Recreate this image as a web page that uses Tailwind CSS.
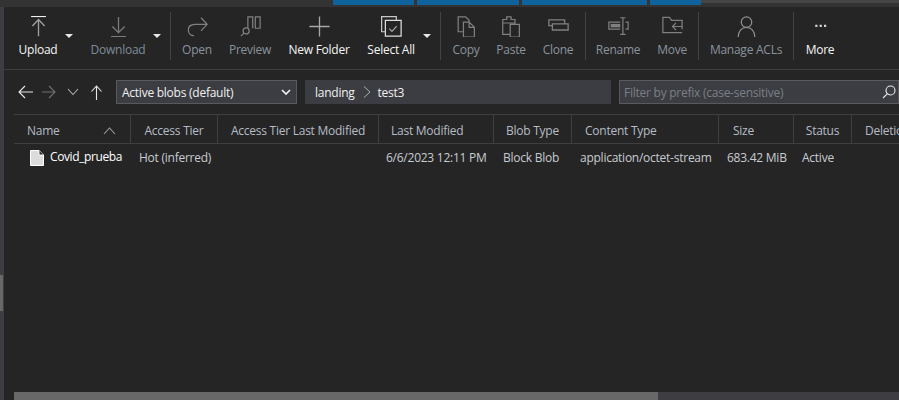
<!DOCTYPE html>
<html>
<head>
<meta charset="utf-8">
<script src="https://cdn.jsdelivr.net/npm/@tailwindcss/browser@4"></script>
</head>
<body class="w-[899px] h-[400px] overflow-hidden bg-[#252526] font-['Open_Sans','Noto_Sans',sans-serif] text-[12px] tracking-[-0.25px] text-[#d4d4d4]">
<div class="flex flex-col h-[400px]">
  <!-- top strip -->
  <div class="h-[7px] bg-[#333334] flex shrink-0">
    <div class="w-[333px]"></div>
    <div class="flex gap-[3px] h-[5px]">
      <div class="w-[81px] bg-[#0e639c]"></div>
      <div class="w-[102px] bg-[#0e639c]"></div>
      <div class="w-[125px] bg-[#0e639c]"></div>
      <div class="w-[51px] bg-[#0e639c]"></div>
    </div>
    <div class="flex-1 h-[3px] bg-[#454547]"></div>
  </div>
  <div class="flex flex-1 min-h-0">
    <!-- left rail -->
    <div class="w-[4px] bg-[#3e3e42] shrink-0 flex flex-col">
      <div class="h-[268px]"></div>
      <div class="h-[36px] w-[3px] bg-[#686868]"></div>
    </div>
    <div class="flex-1 min-w-0 flex flex-col">
      <!-- toolbar -->
      <div class="h-[63px] shrink-0 border-b border-[#3f3f41] flex items-start pt-[5px] pl-[8px]">
        <!-- Upload -->
        <div class="w-[52px] pt-[4px] flex flex-col items-center text-[#f5f5f5] font-medium">
          <svg width="21" height="21" viewBox="0 0 24 24" fill="none" stroke="#a0a0a0" stroke-width="1.500"><path d="M12 23V4M5 11.500L12 4L19 11.500"/><path d="M3.500 .5H20.500" stroke="#f0f0f0"/></svg>
          <span class="mt-[4px]">Upload</span>
        </div>
        <div class="w-[10px] flex justify-center mt-[22px]"><div class="border-x-[4px] border-x-transparent border-t-[4px] border-t-[#e8e8e8] w-0 h-0"></div></div>
        <!-- Download -->
        <div class="w-[62px] ml-[13px] pt-[4px] flex flex-col items-center text-[#7f8b96]">
          <svg width="21" height="21" viewBox="0 0 24 24" fill="none" stroke="#7a7a7a" stroke-width="1.500"><path d="M3.500 23.500H20.500M12 1V19M5 12L12 19L19 12"/></svg>
          <span class="mt-[4px]">Download</span>
        </div>
        <div class="w-[10px] ml-[3px] flex justify-center mt-[22px]"><div class="border-x-[4px] border-x-transparent border-t-[4px] border-t-[#e8e8e8] w-0 h-0"></div></div>
        <div class="w-px h-[48px] bg-[#444446] ml-[8px]"></div>
        <!-- Open -->
        <div class="w-[52px] pt-[4px] flex flex-col items-center text-[#8a939c]">
          <svg width="21" height="21" viewBox="0 0 24 24" fill="none" stroke="#808080" stroke-width="1.400"><path d="M23 9.500H9C4 9.500 1.500 12.500 1.500 16S4 22.500 8 22.500M16 2L23 9.500L16 17"/></svg>
          <span class="mt-[4px]">Open</span>
        </div>
        <!-- Preview -->
        <div class="w-[54px] pt-[4px] flex flex-col items-center text-[#8a939c]">
          <svg width="21" height="21" viewBox="0 0 24 24" fill="none" stroke="#808080" stroke-width="1.400"><path d="M9 14V1H14.500V14M17.500 1H23V14H17.500ZM1 23L4.500 19.500"/><circle cx="7" cy="17" r="3.500"/></svg>
          <span class="mt-[4px]">Preview</span>
        </div>
        <!-- New Folder -->
        <div class="w-[84px] pt-[4px] flex flex-col items-center text-[#f5f5f5] font-medium">
          <svg width="21" height="21" viewBox="0 0 24 24" fill="none" stroke="#a8a8a8" stroke-width="1.500"><path d="M12 .5V23.500M.5 12H23.500"/></svg>
          <span class="mt-[4px]">New Folder</span>
        </div>
        <!-- Select All -->
        <div class="w-[60px] pt-[4px] flex flex-col items-center text-[#f5f5f5] font-medium">
          <svg width="21" height="21" viewBox="0 0 24 24" fill="none" stroke="#c8c8c8" stroke-width="1.400"><path d="M5 18H.7V.7H17.500V5"/><path d="M5 5H23V23H5Z" fill="#252526" stroke="#e0e0e0"/><path d="M9.500 14.500L12.500 17.500L18 11.500" stroke="#a8a8a8"/></svg>
          <span class="mt-[4px]">Select All</span>
        </div>
        <div class="w-[10px] ml-[1px] flex justify-center mt-[22px]"><div class="border-x-[4px] border-x-transparent border-t-[4px] border-t-[#e8e8e8] w-0 h-0"></div></div>
        <div class="w-px h-[48px] bg-[#444446] ml-[8px]"></div>
        <!-- Copy -->
        <div class="w-[50px] pt-[4px] flex flex-col items-center text-[#8a939c]">
          <svg width="21" height="21" viewBox="0 0 24 24" fill="none" stroke="#808080" stroke-width="1.400"><path d="M9 18H2.500V1H11L15 5V7M8.500 7H15L21 13V24H8.500ZM15 7V13H21"/></svg>
          <span class="mt-[4px]">Copy</span>
        </div>
        <!-- Paste -->
        <div class="w-[40px] pt-[4px] flex flex-col items-center text-[#8a939c]">
          <svg width="21" height="21" viewBox="0 0 24 24" fill="none" stroke="#808080" stroke-width="1.400"><path d="M10 21H2V4H6.500V1H11.500V4H16V9M2 8H16M10.500 9.500H21V24H10.500Z"/></svg>
          <span class="mt-[4px]">Paste</span>
        </div>
        <!-- Clone -->
        <div class="w-[54px] pt-[4px] flex flex-col items-center text-[#8a939c]">
          <svg width="21" height="21" viewBox="0 0 24 24" fill="none" stroke="#808080" stroke-width="1.500"><path d="M5 11H1V4.500H19V9M5 9H23V16H5Z"/></svg>
          <span class="mt-[4px]">Clone</span>
        </div>
        <div class="w-px h-[48px] bg-[#444446]"></div>
        <!-- Rename -->
        <div class="w-[64px] pt-[4px] flex flex-col items-center text-[#8a939c]">
          <svg width="21" height="21" viewBox="0 0 24 24" fill="none" stroke="#808080" stroke-width="1.400"><path d="M14 7H1V15H14M14 2H20M17 2V21M14 21H20M20 7H23V15H20"/><rect x="3" y="9" width="11" height="4" fill="#808080" stroke="none"/></svg>
          <span class="mt-[4px]">Rename</span>
        </div>
        <!-- Move -->
        <div class="w-[44px] pt-[4px] flex flex-col items-center text-[#8a939c]">
          <svg width="21" height="21" viewBox="0 0 24 24" fill="none" stroke="#808080" stroke-width="1.400"><path d="M23 15V5H11L8.500 1.500H1V19H23M23 12H12M16 8L12 12L16 16"/></svg>
          <span class="mt-[4px]">Move</span>
        </div>
        <div class="w-px h-[48px] bg-[#444446] ml-[4px]"></div>
        <!-- Manage ACLs -->
        <div class="w-[94px] pt-[4px] flex flex-col items-center text-[#8a939c]">
          <svg width="21" height="21" viewBox="0 0 24 24" fill="none" stroke="#909090" stroke-width="1.400"><circle cx="12" cy="7" r="6"/><path d="M2.500 24C2.500 17 7 13 12 13S21.500 17 21.500 24"/></svg>
          <span class="mt-[4px]">Manage ACLs</span>
        </div>
        <div class="w-px h-[48px] bg-[#444446]"></div>
        <!-- More -->
        <div class="w-[52px] pt-[4px] flex flex-col items-center text-[#f5f5f5] font-medium">
          <svg width="21" height="21" viewBox="0 0 24 24" fill="#d8d8d8"><rect x="6" y="10" width="2.500" height="2.500"/><rect x="11" y="10" width="2.500" height="2.500"/><rect x="16" y="10" width="2.500" height="2.500"/></svg>
          <span class="mt-[4px]">More</span>
        </div>
      </div>
      <!-- nav row -->
      <div class="h-[44px] shrink-0 flex items-center pl-[14px]">
        <svg width="15" height="14" viewBox="0 0 15 14" fill="none" stroke="#e8e8e8" stroke-width="1.100"><path d="M15 7H1M7 1L1 7L7 13"/></svg>
        <svg width="14" height="14" viewBox="0 0 14 14" fill="none" stroke="#707070" stroke-width="1.100" class="ml-[9px]"><path d="M0 7H13M7 1L13 7L7 13"/></svg>
        <svg width="12" height="8" viewBox="0 0 12 8" fill="none" stroke="#b0b0b0" stroke-width="1.100" class="ml-[11px]"><path d="M1 1L6 6.500L11 1"/></svg>
        <svg width="11" height="15" viewBox="0 0 11 15" fill="none" stroke="#e8e8e8" stroke-width="1.100" class="ml-[12px]"><path d="M5.500 15V1M.5 6.500L5.500 1L10.500 6.500"/></svg>
        <div class="ml-[14px] w-[181px] h-[24px] bg-[#3c3d42] border border-[#5a5a5e] flex items-center justify-between pl-[5px] pr-[5px] text-[#f0f0f0]">
          <span class="mt-[2px]">Active blobs (default)</span>
          <svg width="10" height="6" viewBox="0 0 10 6" fill="none" stroke="#f0f0f0" stroke-width="1.700"><path d="M1 1L5 5L9 1"/></svg>
        </div>
        <div class="ml-[8px] w-[306px] h-[24px] bg-[#3c3d42] flex items-center pl-[10px] text-[#f0f0f0]">
          <span class="mt-[2px]">landing</span>
          <svg width="8" height="12" viewBox="0 0 8 12" fill="none" stroke="#b0b0b0" class="ml-[8px] mr-[7px]"><path d="M1 .5L7 6L1 11.500"/></svg>
          <span class="mt-[2px]">test3</span>
        </div>
        <div class="ml-[8px] w-[280px] h-[24px] bg-[#3c3d42] border border-[#5a5a5e] flex items-center justify-between pl-[4px] pr-[2px] text-[#7b7f85]">
          <span class="mt-[2px]">Filter by prefix (case-sensitive)</span>
          <svg width="14" height="14" viewBox="0 0 14 14" fill="none" stroke="#e8e8e8" stroke-width="1.100"><circle cx="8.500" cy="5.500" r="4.500"/><path d="M5.200 8.800L1 13"/></svg>
        </div>
      </div>
      <!-- table -->
      <div class="pl-[10px] flex-1 min-h-0 flex flex-col">
        <div class="grid grid-cols-[117px_87px_161px_115px_78px_147px_75px_58px_1fr] h-[30px] border-y border-[#3f3f41] items-center text-[#b5bcc4] shrink-0">
          <div class="h-full pt-[3px] border-r border-[#3f3f41] flex items-center justify-between pl-[13px] pr-[14px]">
            <span>Name</span>
            <svg width="13" height="8" viewBox="0 0 13 8" fill="none" stroke="#a0a0a0" stroke-width="1.100"><path d="M1 7L6.500 1L12 7"/></svg>
          </div>
          <div class="h-full pt-[3px] border-r border-[#3f3f41] flex items-center justify-center">Access Tier</div>
          <div class="h-full pt-[3px] border-r border-[#3f3f41] flex items-center justify-center">Access Tier Last Modified</div>
          <div class="h-full pt-[3px] border-r border-[#3f3f41] flex items-center pl-[12px]">Last Modified</div>
          <div class="h-full pt-[3px] border-r border-[#3f3f41] flex items-center justify-center">Blob Type</div>
          <div class="h-full pt-[3px] border-r border-[#3f3f41] flex items-center pl-[13px]">Content Type</div>
          <div class="h-full pt-[3px] border-r border-[#3f3f41] flex items-center pl-[14px]">Size</div>
          <div class="h-full pt-[3px] border-r border-[#3f3f41] flex items-center justify-center">Status</div>
          <div class="h-full pt-[3px] flex items-center pl-[13px] overflow-hidden whitespace-nowrap">Deletion</div>
        </div>
        <div class="grid grid-cols-[117px_87px_161px_115px_78px_147px_75px_58px_1fr] h-[27px] items-center text-[#c8ccd0] shrink-0">
          <div class="flex items-center pl-[16px] gap-[6px] text-white whitespace-nowrap">
            <svg width="14" height="16" viewBox="0 0 14 16" fill="none" stroke="#ffffff"><path d="M.5 .5H9L13.500 5V15.500H.5Z" fill="#dcdcdc"/><path d="M9 .5V5H13.500" fill="#252526"/></svg>
            <span class="mt-[-2px] tracking-[-0.4px]">Covid_prueba</span>
          </div>
          <div class="pl-[8px]">Hot (inferred)</div>
          <div></div>
          <div class="pl-[7px]">6/6/2023 12:11 PM</div>
          <div class="pl-[9px]">Block Blob</div>
          <div class="pl-[8px] whitespace-nowrap">application/octet-stream</div>
          <div class="pl-[8px] whitespace-nowrap">683.42 MiB</div>
          <div class="pl-[8px]">Active</div>
          <div></div>
        </div>
        <div class="flex-1"></div>
        <!-- bottom scrollbar -->
        <div class="h-[8px] shrink-0 bg-[#3e3e42]">
          <div class="h-full w-[644px] bg-[#686868]"></div>
        </div>
      </div>
    </div>
  </div>
</div>
</body>
</html>
